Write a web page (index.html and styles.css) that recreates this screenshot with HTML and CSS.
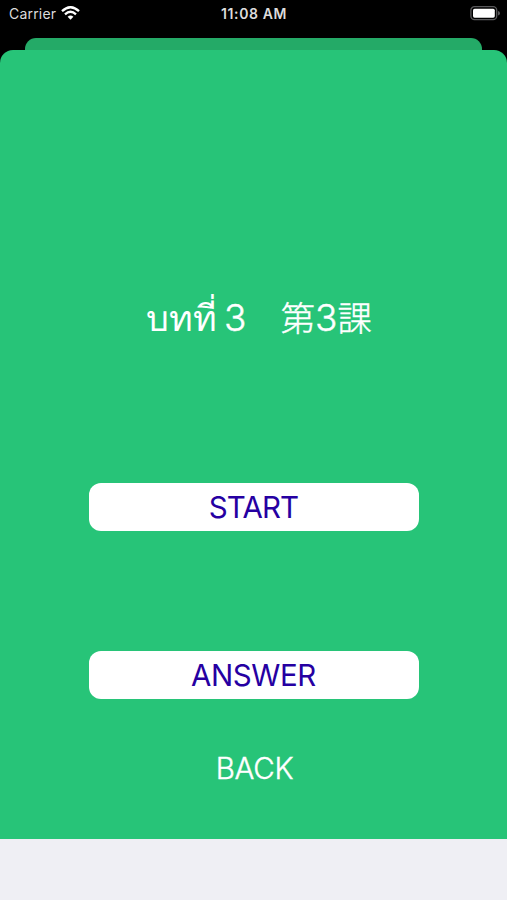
FILE: index.html
```
<!DOCTYPE html>
<html lang="th">
<head>
  <meta charset="UTF-8">
  <title>บทที่ 3</title>
  <link rel="stylesheet" href="styles.css">
</head>
<body>
  <div class="status-bar">
    <div class="carrier">
      <span>Carrier</span>
      <svg class="wifi" width="19" height="15" viewBox="0 0 19 15">
        <path d="M1 5.2 Q9.5 -2.8 18 5.2" />
        <path d="M4 8.3 Q9.5 3.2 15 8.3" />
        <path class="dot" d="M6.6 10.7 Q9.5 8.2 12.4 10.7 L9.5 13.8 Z" />
      </svg>
    </div>
    <div class="time">11:08 AM</div>
    <div class="battery">
      <svg width="30" height="15" viewBox="0 0 30 15">
        <rect class="shell" x="0.9" y="0.7" width="25.8" height="13" rx="3.6" />
        <rect class="level" x="3" y="2.7" width="21.8" height="9" rx="1.6" />
        <path class="cap" d="M28 5 Q30 5.5 30 7.25 Q30 9 28 9.5 Z" />
      </svg>
    </div>
  </div>
  <div class="sheet-behind"></div>
  <main class="sheet">
    <h1><span class="thai">บทที่</span><span class="num">3</span><span class="lesson">第<span class="digit">3</span>課</span></h1>
    <button class="btn start">START</button>
    <button class="btn answer">ANSWER</button>
    <button class="back">BACK</button>
  </main>
  <div class="bottom"></div>
</body>
</html>
```

FILE: styles.css
```
* {
  box-sizing: border-box;
}
body {
  margin: 0;
  height: 900px;
  overflow: hidden;
  display: flex;
  flex-direction: column;
  background: #000;
  font-family: Inter, "Noto Sans CJK JP", sans-serif;
}
.status-bar {
  height: 38px;
  padding: 0 7px 0 9px;
  display: grid;
  grid-template-columns: 1fr auto 1fr;
  color: #dcdcdc;
  font-size: 14px;
  line-height: 28px;
}
.carrier {
  display: flex;
  gap: 5px;
  letter-spacing: 0.2px;
}
.wifi {
  margin-top: 6px;
  fill: none;
  stroke: #fff;
  stroke-width: 2.3;
}
.wifi .dot {
  fill: #fff;
  stroke: none;
}
.time {
  font-weight: 600;
  letter-spacing: 0.6px;
  margin-right: 1px;
}
.battery {
  display: flex;
  justify-content: flex-end;
  padding-top: 6px;
}
.shell {
  fill: none;
  stroke: #59595b;
  stroke-width: 1.3;
}
.level {
  fill: #fff;
}
.cap {
  fill: #59595b;
}
.sheet-behind {
  height: 12px;
  margin: 0 25px;
  border-radius: 11px 11px 0 0;
  background: #24aa67;
}
.sheet {
  height: 789px;
  border-radius: 13px 13px 0 0;
  background: #27c478;
  display: flex;
  flex-direction: column;
  align-items: center;
}
h1 {
  height: 50px;
  margin: 243px 0 0 11px;
  display: flex;
  align-items: baseline;
  color: #fff;
  font-size: 36px;
  font-weight: 300;
  line-height: 50px;
  -webkit-text-stroke: 0.4px #fff;
}
.thai {
  -webkit-text-stroke: 0;
}
.num {
  margin-left: 7px;
  font-size: 37px;
}
.lesson {
  margin-left: 34px;
  font-size: 34.5px;
}
.digit {
  font-size: 37px;
}
.btn {
  width: 330px;
  height: 48px;
  margin-left: 1px;
  padding: 0 1px 1px 0;
  border: 0;
  border-radius: 12px;
  background: #fff;
  color: #2600a2;
  font-family: inherit;
  font-size: 29.5px;
}
.start {
  margin-top: 140px;
  letter-spacing: -0.9px;
}
.answer {
  margin-top: 120px;
  letter-spacing: -0.4px;
}
.back {
  margin: 49px 0 0 2px;
  height: 40px;
  padding: 0;
  border: 0;
  background: none;
  color: #fff;
  font-family: inherit;
  font-size: 29.5px;
  font-weight: 300;
  letter-spacing: -0.3px;
  -webkit-text-stroke: 0.4px #fff;
}
.bottom {
  flex: 1;
  background: #efeff4;
}
```
